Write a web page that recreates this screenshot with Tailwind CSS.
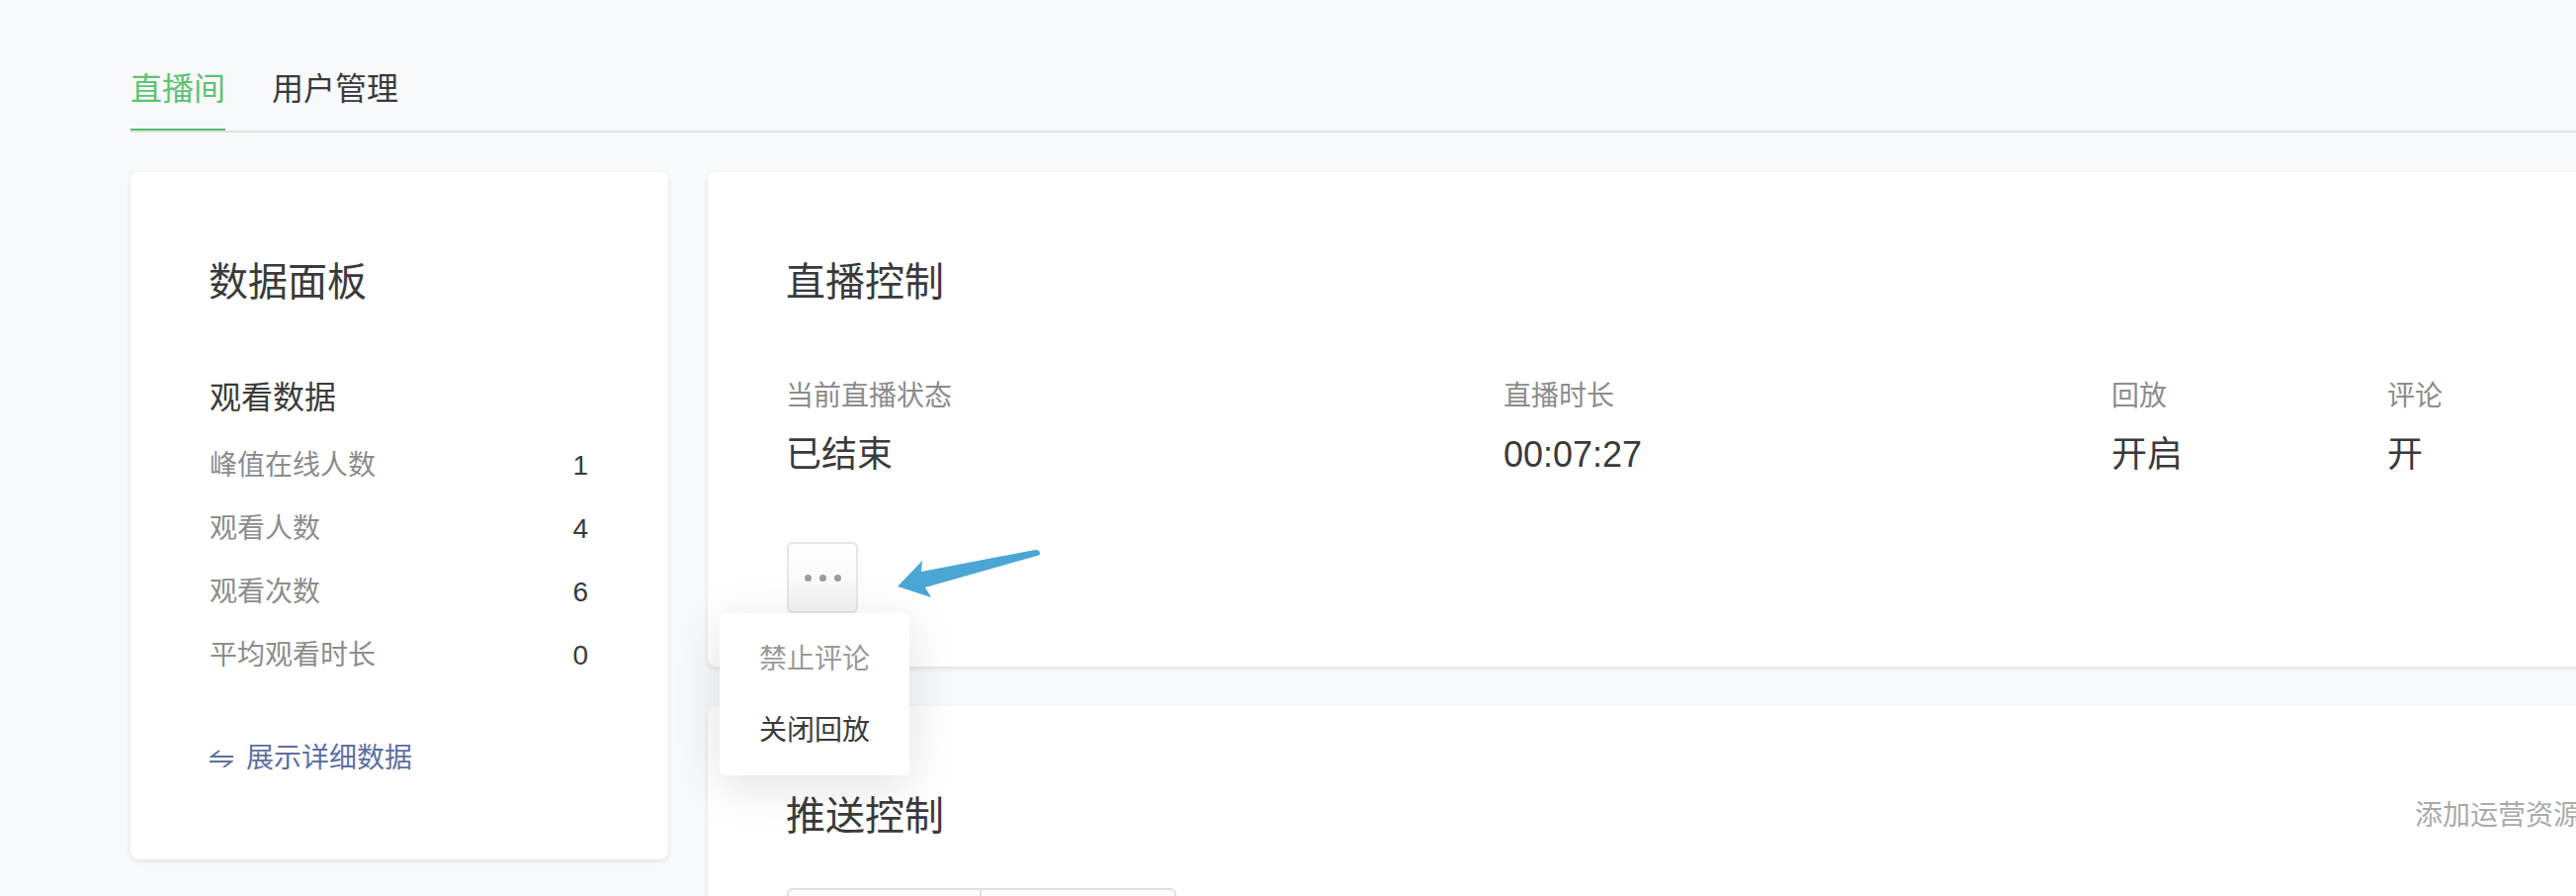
<!DOCTYPE html>
<html lang="zh-CN">
<head>
  <meta charset="UTF-8" />
  <title>直播间</title>
  <script src="https://cdn.jsdelivr.net/npm/@tailwindcss/browser@4"></script>
</head>
<body class="bg-[#f8f9fb] h-[906px] overflow-hidden text-[#3a3a3a] font-['Liberation_Sans','Noto_Sans_CJK_SC',sans-serif]">
  <div class="w-[2691px] ml-[132px]">

    <!-- Tabs -->
    <div class="flex border-b-2 border-[#dfe1e4] pt-[68px]">
      <div class="w-[96px] h-[64px] leading-[44px] text-[32px] text-[#5cc273] border-b-2 border-[#55bf6b]">直播间</div>
      <div class="ml-[47px] leading-[44px] text-[32px]">用户管理</div>
    </div>

    <div class="flex items-start gap-[40px] mt-[40px]">

      <!-- Data panel -->
      <div class="w-[544px] bg-white rounded-lg shadow-[0_2px_5px_rgba(0,0,0,0.1)] pl-[80px] pr-[81px] pt-[83px] pb-[82px]">
        <h2 class="text-[40px] leading-[56px] -ml-[1px]">数据面板</h2>
        <h3 class="text-[32px] leading-[44px] mt-[67px]">观看数据</h3>
        <div class="mt-[15px] text-[28px]">
          <div class="flex justify-between items-center h-[64px]"><span class="text-[#8c8c8c]">峰值在线人数</span><span>1</span></div>
          <div class="flex justify-between items-center h-[64px]"><span class="text-[#8c8c8c]">观看人数</span><span>4</span></div>
          <div class="flex justify-between items-center h-[64px]"><span class="text-[#8c8c8c]">观看次数</span><span>6</span></div>
          <div class="flex justify-between items-center h-[64px]"><span class="text-[#8c8c8c]">平均观看时长</span><span>0</span></div>
        </div>
        <div class="flex items-center gap-[13px] mt-[52px] h-[40px] text-[28px] text-[#5b6f9f]">
          <svg width="24" height="18" viewBox="0 0 24 18" fill="none" stroke="#5b6f9f" stroke-width="2">
            <path d="M24 7H2L10 1" />
            <path d="M0 12H22L14 18" />
          </svg>
          <span>展示详细数据</span>
        </div>
      </div>

      <div class="w-[1975px] flex flex-col gap-[40px]">

        <!-- Live control -->
        <div class="bg-white rounded-lg shadow-[0_2px_5px_rgba(0,0,0,0.1)] pl-[80px] pt-[83px] pb-[54px]">
          <h2 class="text-[40px] leading-[56px] -ml-[1px]">直播控制</h2>
          <div class="flex mt-[68px]">
            <div class="w-[725px] -ml-[1px]">
              <div class="text-[28px] leading-[40px] text-[#8c8c8c]">当前直播状态</div>
              <div class="text-[36px] leading-[50px] mt-[14px]">已结束</div>
            </div>
            <div class="w-[615px] ml-[1px]">
              <div class="text-[28px] leading-[40px] text-[#8c8c8c]">直播时长</div>
              <div class="text-[36px] leading-[50px] mt-[14px]">00:07:27</div>
            </div>
            <div class="w-[279px]">
              <div class="text-[28px] leading-[40px] text-[#8c8c8c]">回放</div>
              <div class="text-[36px] leading-[50px] mt-[14px]">开启</div>
            </div>
            <div>
              <div class="text-[28px] leading-[40px] text-[#8c8c8c]">评论</div>
              <div class="text-[36px] leading-[50px] mt-[14px]">开</div>
            </div>
          </div>

          <div class="relative z-10 w-[72px] mt-[63px]">
            <div class="w-[72px] h-[72px] flex items-center justify-center gap-[8px] rounded-md border-2 border-[#e3e6ea] bg-gradient-to-b from-white to-[#f4f4f5]">
              <span class="w-[7px] h-[7px] rounded-full bg-[#9b9b9b]"></span>
              <span class="w-[7px] h-[7px] rounded-full bg-[#9b9b9b]"></span>
              <span class="w-[7px] h-[7px] rounded-full bg-[#9b9b9b]"></span>
            </div>

            <!-- Dropdown -->
            <div class="absolute left-[-68px] top-[72px] w-[192px] pt-[11px] pb-[9px] bg-white rounded-md shadow-[0_10px_50px_rgba(0,0,0,0.12)] text-[28px]">
              <div class="h-[72px] flex items-center justify-center text-[#999]">禁止评论</div>
              <div class="h-[72px] flex items-center justify-center">关闭回放</div>
            </div>

            <!-- Annotation arrow -->
            <svg class="absolute left-[112px] top-[8px]" width="145" height="50" viewBox="0 0 145 50">
              <path d="M0 37 L25 11 L24 22 L139 0 Q144 0 144 3 Q144 6 141 6 L28 38 L34 48 Z" fill="#4ba6d3" />
            </svg>
          </div>
        </div>

        <!-- Push control -->
        <div class="bg-white rounded-lg shadow-[0_2px_5px_rgba(0,0,0,0.1)] px-[80px] pt-[83px] pb-[60px]">
          <div class="flex justify-between items-center">
            <h2 class="text-[40px] leading-[56px] -ml-[1px]">推送控制</h2>
            <span class="text-[28px] text-[#aaa]">添加运营资源</span>
          </div>
          <div class="flex w-[394px] h-[72px] mt-[45px] rounded-md border-2 border-[#e0e0e0]">
            <div class="w-1/2 border-r-2 border-[#e0e0e0]"></div>
            <div class="w-1/2"></div>
          </div>
        </div>
      </div>
    </div>
  </div>
</body>
</html>
